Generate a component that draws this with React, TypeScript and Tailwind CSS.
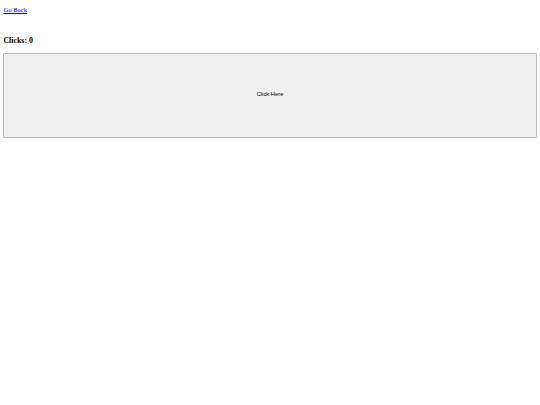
export default function App() {
  return (
    <div className="min-h-[405px] bg-white px-[3.4px] font-['Liberation_Serif',serif] text-black">
      <p className="pt-[6px] text-[6.75px] leading-[1.15]">
        <a href="#" className="text-[#0000ee] underline">Go Back</a>
      </p>
      <h3 className="mt-[22px] text-[7.9px] font-bold leading-[1.15]">Clicks: 0</h3>
      <button className="mt-[8.5px] flex h-[85px] w-full items-center justify-center rounded-[1px] border border-[#b8b8b8] bg-[#efefef] pb-[2px] font-['Liberation_Sans',sans-serif] text-[5.8px] text-black">
        Click Here
      </button>
    </div>
  );
}
